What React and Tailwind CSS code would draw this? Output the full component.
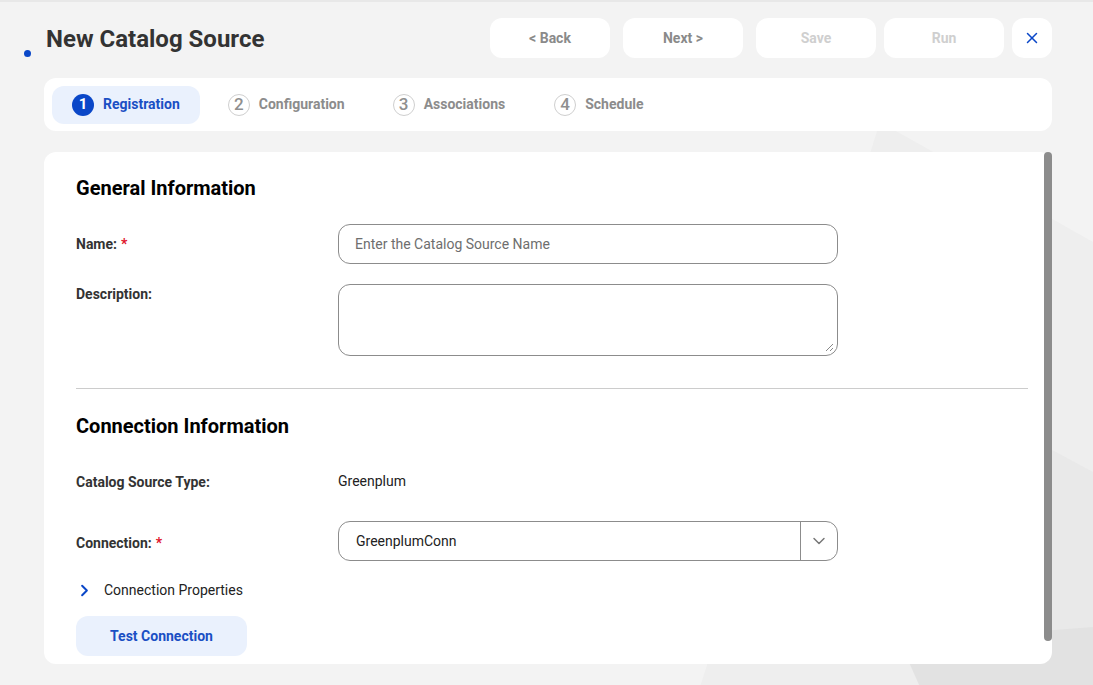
import { X, ChevronDown, ChevronRight } from "lucide-react";

const font = { fontFamily: "Roboto, 'Liberation Sans', sans-serif" };

function Step({ n, label, active }) {
  return (
    <div
      className={`flex items-center gap-[9px] h-[38px] rounded-xl ${
        active ? "bg-[#eaf1fd] pl-5 pr-5" : "px-0"
      }`}
    >
      {active ? (
        <span className="w-[22px] h-[22px] rounded-full bg-[#0a47c8] text-white text-[15px] font-bold flex items-center justify-center">
          {n}
        </span>
      ) : (
        <span className="w-[22px] h-[22px] rounded-full border border-[#cfcfcf] text-[#8f8f8f] text-[17px] font-medium flex items-center justify-center">
          {n}
        </span>
      )}
      <span
        className={`text-[14px] font-bold ${
          active ? "text-[#1a4fc4]" : "text-[#8c8c8c]"
        }`}
      >
        {label}
      </span>
    </div>
  );
}

function Label({ children, required }) {
  return (
    <div className="w-[262px] text-[14px] font-bold text-[#333]">
      {children}
      {required && <span className="text-[#e0132b] ml-1">*</span>}
    </div>
  );
}

export default function App() {
  return (
    <div
      style={font}
      className="relative w-[1093px] h-[685px] bg-[#f3f3f3] overflow-hidden border-t-2 border-[#e8e8e8]"
    >
      <svg
        className="absolute inset-0 pointer-events-none"
        width="1093"
        height="685"
      >
        <polygon points="880,120 1093,240 1093,685 700,685" fill="#eeeeee" />
        <polygon points="1000,420 1093,470 1093,685 930,685" fill="#e9e9e9" />
        <polygon points="900,640 1093,625 1093,685 920,685" fill="#e2e2e2" />
      </svg>

      <div className="relative">
        {/* header */}
        <div className="flex items-center h-[74px] pt-[14px] pb-[16px]">
          <span className="ml-[24px] mt-[30px] w-[7px] h-[7px] rounded-full bg-[#0a47c8]" />
          <h1 className="ml-[15px] mt-[2px] text-[24px] font-bold text-[#333] leading-none">
            New Catalog Source
          </h1>
          <div className="ml-auto mr-[41px] flex items-center">
            <button className="w-[120px] h-[40px] rounded-xl bg-white text-[14px] font-bold text-[#8a8a8a]">
              &lt; Back
            </button>
            <button className="ml-[13px] w-[120px] h-[40px] rounded-xl bg-white text-[14px] font-bold text-[#8a8a8a]">
              Next &gt;
            </button>
            <button className="ml-[13px] w-[120px] h-[40px] rounded-xl bg-white text-[14px] font-bold text-[#cfcfcf]">
              Save
            </button>
            <button className="ml-[8px] w-[120px] h-[40px] rounded-xl bg-white text-[14px] font-bold text-[#cfcfcf]">
              Run
            </button>
            <button className="ml-[8px] w-[40px] h-[40px] rounded-xl bg-white flex items-center justify-center text-[#0a47c8]">
              <X size={18} strokeWidth={2} />
            </button>
          </div>
        </div>

        {/* stepper */}
        <div className="ml-[44px] mr-[41px] mt-[2px] h-[53px] bg-white rounded-xl flex items-center px-2 gap-[28px]">
          <Step n="1" label="Registration" active />
          <Step n="2" label="Configuration" />
          <div className="ml-[20px]">
            <Step n="3" label="Associations" />
          </div>
          <div className="ml-[21px]">
            <Step n="4" label="Schedule" />
          </div>
        </div>

        {/* main card */}
        <div className="ml-[44px] mr-[41px] mt-[21px] h-[512px] bg-white rounded-xl relative">
          <div className="absolute right-0 top-0 w-[8px] h-[489px] rounded-full bg-[#8c8c8c]" />
          <div className="pl-[32px] pr-[24px] pt-[25px]">
            <h2 className="text-[20px] font-bold text-black leading-[22px]">
              General Information
            </h2>

            <div className="flex items-center mt-[25px]">
              <Label required>Name:</Label>
              <div className="w-[500px] h-[40px] rounded-xl border border-[#8c8c8c] flex items-center px-4 text-[14px] text-[#6e6e6e]">
                Enter the Catalog Source Name
              </div>
            </div>

            <div className="flex items-start mt-[20px]">
              <Label>Description:</Label>
              <div className="relative w-[500px] h-[72px] rounded-xl border border-[#8c8c8c]">
                <svg
                  className="absolute right-[3px] bottom-[3px]"
                  width="10"
                  height="10"
                  viewBox="0 0 10 10"
                >
                  <line x1="9" y1="2" x2="2" y2="9" stroke="#888" strokeWidth="1" />
                  <line x1="9" y1="6" x2="6" y2="9" stroke="#888" strokeWidth="1" />
                </svg>
              </div>
            </div>

            <div className="mt-[32px] h-px bg-[#cccccc]" />

            <h2 className="mt-[26px] text-[20px] font-bold text-black leading-[22px]">
              Connection Information
            </h2>

            <div className="flex items-center mt-[35px]">
              <Label>Catalog Source Type:</Label>
              <div className="text-[14px] text-[#222] -mt-[2px]">Greenplum</div>
            </div>

            <div className="flex items-center mt-[28px]">
              <div className="pt-[4px]">
                <Label required>Connection:</Label>
              </div>
              <div className="w-[500px] h-[40px] rounded-xl border border-[#8c8c8c] flex items-center">
                <span className="flex-1 pl-[17px] text-[14px] text-[#222]">
                  GreenplumConn
                </span>
                <span className="w-px h-full bg-[#8c8c8c]" />
                <span className="w-[36px] flex items-center justify-center text-[#777]">
                  <ChevronDown size={20} strokeWidth={1.75} />
                </span>
              </div>
            </div>

            <div className="flex items-center mt-[19px] h-[20px]">
              <ChevronRight
                size={19}
                strokeWidth={2.5}
                className="text-[#0a47c8] -ml-[1px]"
              />
              <span className="ml-[10px] text-[14px] text-[#222]">
                Connection Properties
              </span>
            </div>

            <button className="mt-[16px] w-[171px] h-[40px] rounded-xl bg-[#eaf1fd] text-[14px] font-bold text-[#1a4fc4]">
              Test Connection
            </button>
          </div>
        </div>
      </div>
    </div>
  );
}
